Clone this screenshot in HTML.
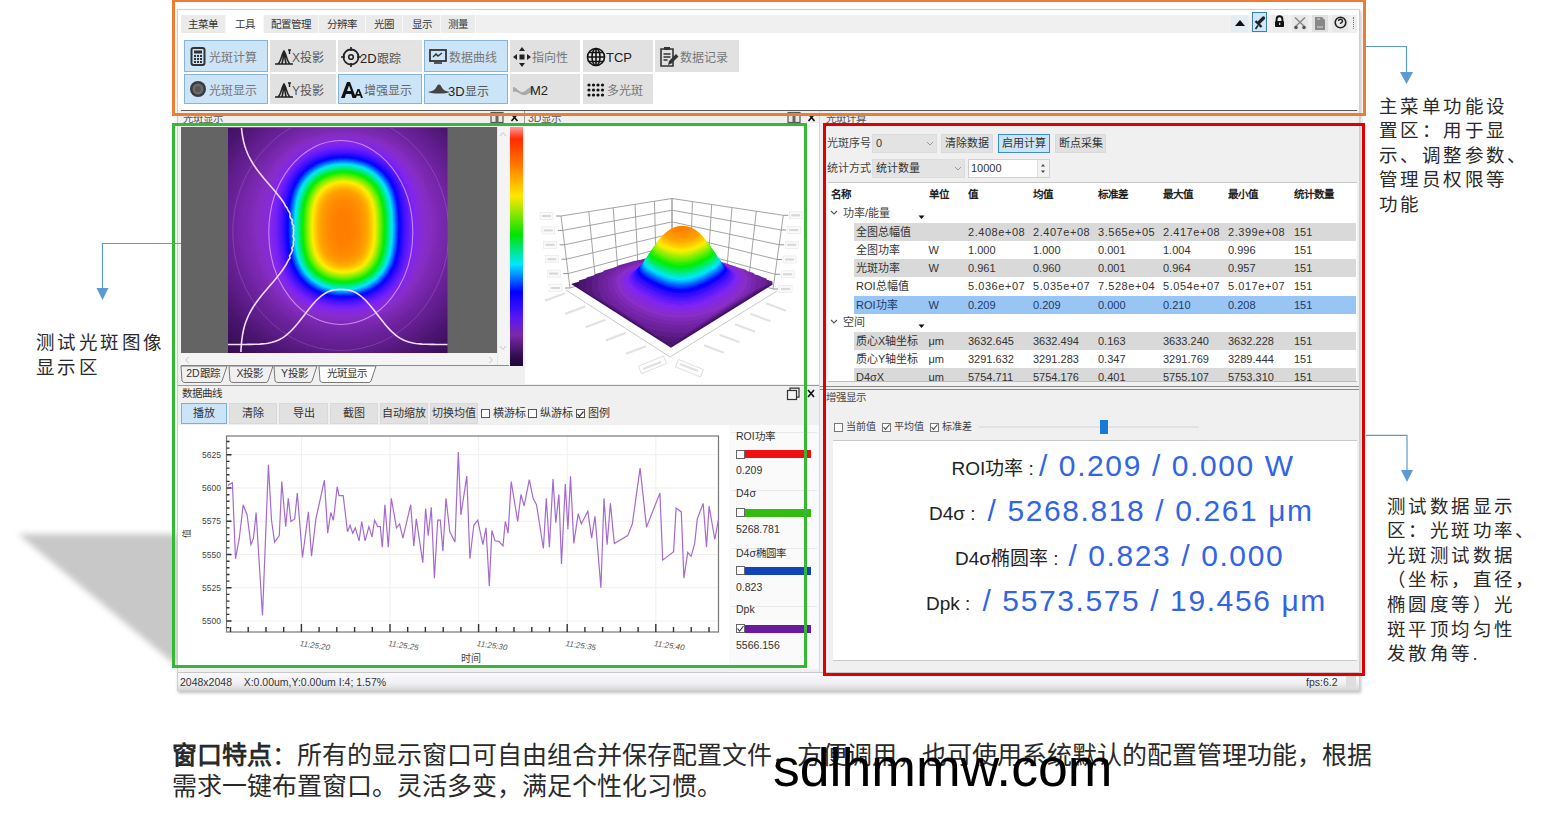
<!DOCTYPE html>
<html lang="zh-CN"><head><meta charset="utf-8">
<style>
*{margin:0;padding:0;box-sizing:border-box}
html,body{width:1545px;height:815px;overflow:hidden;background:#fff}
body{position:relative;font-family:"Liberation Sans",sans-serif;color:#222;text-spacing-trim:space-all}
.a{position:absolute}
.ui{font-size:10.5px;color:#333;white-space:nowrap;line-height:1}
.btn{position:absolute;background:#e1e1e1;border:1px solid #e1e1e1;font-size:12px;color:#555;white-space:nowrap;line-height:29px;padding-left:4px}
.btn.sel{background:#cce4f7;border-color:#88b4dc}
.tab{position:absolute;top:15px;height:18px;background:#ebebeb;font-size:10.5px;color:#333;text-align:center;line-height:18px;border-right:1px solid #f8f8f8}
.tab.sel{background:#fff}
.tb{position:absolute;top:403px;height:21px;background:#e1e1e1;border:1px solid #d9d9d9;font-size:11px;color:#333;text-align:center;line-height:19px}
.tb.sel{background:#cce4f7;border-color:#7aaee0}
.ann{position:absolute;font-size:18.5px;letter-spacing:2.4px;line-height:24.6px;color:#2a2a2a;white-space:nowrap}
.hdr{position:absolute;top:186px;font-size:10.5px;font-weight:bold;color:#222;white-space:nowrap}
.row{position:absolute;left:854px;width:502px;height:18px}
.cell{position:absolute;font-size:11px;color:#333;white-space:nowrap;line-height:18px;top:0}
.lg{position:absolute;font-size:11px;color:#333;white-space:nowrap}
.big{position:absolute;white-space:nowrap;line-height:1}
.big .l{font-size:19px;color:#222}
.big .v{font-size:30px;color:#3264e4;letter-spacing:1.6px}

</style></head><body>

<!-- shadow -->
<svg class="a" style="left:0;top:515px" width="200" height="170">
 <defs><filter id="sb" x="-20%" y="-20%" width="140%" height="140%"><feGaussianBlur stdDeviation="3"/></filter></defs>
 <polygon points="18,19 178,19 178,152" fill="#c8c8c8" filter="url(#sb)"/>
</svg>

<!-- app window -->
<div class="a" style="left:177px;top:9px;width:1183px;height:682px;background:#f0f0f0;border:1px solid #cfcfcf;box-shadow:1px 2px 3px rgba(0,0,0,0.25)"></div>
<!-- ribbon white -->
<div class="a" style="left:178px;top:10px;width:1181px;height:100px;background:#fff"></div>
<div class="a" style="left:181px;top:15px;width:1176px;height:18px;background:#f0f0f0"></div>
<div class="tab" style="left:181px;width:45px">主菜单</div>
<div class="tab sel" style="left:226px;width:38px">工具</div>
<div class="tab" style="left:264px;width:55px">配置管理</div>
<div class="tab" style="left:319px;width:47px">分辨率</div>
<div class="tab" style="left:366px;width:37px">光圈</div>
<div class="tab" style="left:403px;width:38px">显示</div>
<div class="tab" style="left:441px;width:35px">测量</div>
<div class="a" style="left:181px;top:110px;width:1176px;height:1px;background:#5a5a5a"></div>

<!-- ribbon buttons -->
<div class="btn sel" style="left:184px;top:40px;width:84px;height:32px"><svg class="a" style="left:4.5px;top:6px" width="16" height="19" viewBox="0 0 16 19"><rect x="1.5" y="1" width="13" height="17" rx="2" fill="none" stroke="#333" stroke-width="2"/><rect x="4" y="3.5" width="8" height="3" fill="#333"/><g fill="#333"><rect x="4" y="8" width="2" height="2"/><rect x="7" y="8" width="2" height="2"/><rect x="10" y="8" width="2" height="2"/><rect x="4" y="11" width="2" height="2"/><rect x="7" y="11" width="2" height="2"/><rect x="10" y="11" width="2" height="2"/><rect x="4" y="14" width="2" height="2"/><rect x="7" y="14" width="2" height="2"/><rect x="10" y="14" width="2" height="2"/></g></svg><span class="a" style="left:24px;top:3px;color:#777">光斑计算</span></div>
<div class="btn" style="left:270px;top:40px;width:66px;height:32px"><svg class="a" style="left:3px;top:8px" width="22" height="16" viewBox="0 0 22 16"><path d="M1 15H19M4 15C7 13 8 4 10 2C12 4 13 13 16 15M8 15C9 10 10 6 10 2M12 15C11 10 10.5 6 10 2" fill="none" stroke="#222" stroke-width="1.6"/><path d="M14 1h3M15.5 1v4" stroke="#222" stroke-width="1.4"/></svg><span class="a" style="left:21px;top:3px;color:#555">X投影</span></div>
<div class="btn" style="left:338px;top:40px;width:84px;height:32px;background:#e3e3e3"><svg class="a" style="left:2px;top:6px" width="20" height="20" viewBox="0 0 20 20"><circle cx="10" cy="10" r="7.5" fill="none" stroke="#222" stroke-width="1.8"/><circle cx="10" cy="10" r="2.3" fill="none" stroke="#222" stroke-width="1.6"/><path d="M10 0v4M10 16v4M0 10h4M16 10h4" stroke="#222" stroke-width="1.6"/></svg><span class="a" style="left:21px;top:3px;color:#555"><span style="color:#222;font-size:13px">2D</span>跟踪</span></div>
<div class="btn sel" style="left:424px;top:40px;width:84px;height:32px"><svg class="a" style="left:4px;top:8px" width="18" height="16" viewBox="0 0 18 16"><rect x="1" y="1" width="16" height="11" fill="none" stroke="#333" stroke-width="1.8"/><path d="M5 14h8" stroke="#333" stroke-width="1.6"/><path d="M4 8l3-3 2 2 4-3" fill="none" stroke="#333" stroke-width="1.4"/></svg><span class="a" style="left:24px;top:3px;color:#777">数据曲线</span></div>
<div class="btn" style="left:510px;top:40px;width:70px;height:32px"><svg class="a" style="left:2px;top:6px" width="18" height="20" viewBox="0 0 18 20"><path d="M9 0L6 4h6zM9 20l-3-4h6zM0 10l4-3v6zM18 10l-4-3v6z" fill="#222"/><rect x="6.5" y="7.5" width="5" height="5" fill="#222"/></svg><span class="a" style="left:21px;top:3px;color:#777">指向性</span></div>
<div class="btn" style="left:583px;top:40px;width:70px;height:32px"><svg class="a" style="left:2px;top:6px" width="20" height="20" viewBox="0 0 20 20"><g fill="none" stroke="#111" stroke-width="1.6"><circle cx="10" cy="10" r="8.5"/><ellipse cx="10" cy="10" rx="4" ry="8.5"/><path d="M10 1.5v17M1.5 10h17M3 5.5h14M3 14.5h14"/></g></svg><span class="a" style="left:22px;top:2px;color:#222;font-size:13px">TCP</span></div>
<div class="btn" style="left:655px;top:40px;width:84px;height:32px"><svg class="a" style="left:3px;top:5px" width="20" height="22" viewBox="0 0 20 22"><path d="M2 3h12v17H2z" fill="none" stroke="#333" stroke-width="1.6"/><path d="M5 1h6v3H5z" fill="#333"/><path d="M4.5 8h7M4.5 11h7M4.5 14h4" stroke="#333" stroke-width="1.3"/><path d="M9 19l1-4 7-7 2.5 2.5-7 7z" fill="#333"/></svg><span class="a" style="left:24px;top:3px;color:#777">数据记录</span></div>

<div class="btn sel" style="left:184px;top:74px;width:84px;height:30px;line-height:27px"><svg class="a" style="left:4px;top:5px" width="18" height="18" viewBox="0 0 18 18"><circle cx="9" cy="9" r="8" fill="#3a3a3a"/><circle cx="9" cy="9" r="5.5" fill="#6a6a6a"/><circle cx="9" cy="9" r="3" fill="#555"/></svg><span class="a" style="left:24px;top:2.5px;color:#777">光斑显示</span></div>
<div class="btn" style="left:270px;top:74px;width:66px;height:30px;line-height:27px"><svg class="a" style="left:3px;top:7px" width="22" height="16" viewBox="0 0 22 16"><path d="M1 15H19M4 15C7 13 8 4 10 2C12 4 13 13 16 15M8 15C9 10 10 6 10 2M12 15C11 10 10.5 6 10 2" fill="none" stroke="#222" stroke-width="1.6"/><path d="M14 1h3M15.5 1v4" stroke="#222" stroke-width="1.4"/></svg><span class="a" style="left:21px;top:2.5px;color:#555">Y投影</span></div>
<div class="btn sel" style="left:338px;top:74px;width:84px;height:30px;line-height:27px"><svg class="a" style="left:2px;top:6px" width="22" height="18" viewBox="0 0 22 18"><path d="M0 17L6 1h3l6 16h-3.5l-1.3-4H5l-1.3 4zM6 10h4L8 4.5z" fill="#111"/><path d="M13 17l3.5-9h2l3.5 9h-2l-.8-2.3h-3.4L15 17zM16.3 13h2.2l-1.1-3z" fill="#111"/></svg><span class="a" style="left:25px;top:2.5px;color:#666">增强显示</span></div>
<div class="btn sel" style="left:424px;top:74px;width:84px;height:30px;line-height:27px"><svg class="a" style="left:3px;top:9px" width="22" height="12" viewBox="0 0 22 12"><path d="M0 8C5 7 7 6 9 2C10 0 12 0 13 2C15 6 17 7 22 8C17 10 5 10 0 8z" fill="#444"/></svg><span class="a" style="left:23px;top:2.5px;color:#555"><span style="color:#222;font-size:13px">3D</span>显示</span></div>
<div class="btn" style="left:510px;top:74px;width:70px;height:30px;line-height:27px"><svg class="a" style="left:2px;top:9px" width="20" height="12" viewBox="0 0 20 12"><path d="M0 3C4 3 6 9 10 8C14 7 16 2 20 3V9C16 8 14 12 10 11C6 10 4 6 0 8z" fill="#aaa"/></svg><span class="a" style="left:19px;top:1.5px;color:#222;font-size:13px">M2</span></div>
<div class="btn" style="left:583px;top:74px;width:70px;height:30px;line-height:27px"><svg class="a" style="left:3px;top:8px" width="18" height="14" viewBox="0 0 18 14"><g fill="#111"><circle cx="2" cy="2" r="1.6"/><circle cx="6.5" cy="2" r="1.6"/><circle cx="11" cy="2" r="1.6"/><circle cx="15.5" cy="2" r="1.6"/><circle cx="2" cy="7" r="1.6"/><circle cx="6.5" cy="7" r="1.6"/><circle cx="11" cy="7" r="1.6"/><circle cx="15.5" cy="7" r="1.6"/><circle cx="2" cy="12" r="1.6"/><circle cx="6.5" cy="12" r="1.6"/><circle cx="11" cy="12" r="1.6"/><circle cx="15.5" cy="12" r="1.6"/></g></svg><span class="a" style="left:23px;top:2.5px;color:#777">多光斑</span></div>

<!-- right top icons -->
<div class="a" style="left:1231px;top:15px;width:17px;height:17px;background:#e4ecf4"></div>
<svg class="a" style="left:1234px;top:19px" width="12" height="8"><path d="M1 7L6 1L11 7z" fill="#111"/></svg>
<div class="a" style="left:1252px;top:12px;width:15px;height:20px;background:#cce8fb;border:1px solid #3c7fb1"></div>
<svg class="a" style="left:1252px;top:12px" width="15" height="20" viewBox="0 0 15 20"><path d="M11.5 6L7 10.5" stroke="#222" stroke-width="3.2" stroke-linecap="round"/><path d="M3.5 9L9.5 15" stroke="#222" stroke-width="2.4"/><path d="M6 13.5L3.5 17" stroke="#222" stroke-width="1.6"/></svg>
<div class="a" style="left:1272px;top:15px;width:16px;height:17px;background:#ececec"></div>
<svg class="a" style="left:1273px;top:15px" width="13" height="13" viewBox="0 0 13 13"><path d="M3.6 6V4.2a2.9 2.9 0 015.8 0V6" fill="none" stroke="#111" stroke-width="1.9"/><rect x="2" y="6" width="9" height="6" rx="0.8" fill="#111"/><rect x="6" y="7.6" width="1.3" height="2.4" fill="#ccc"/></svg>
<div class="a" style="left:1292px;top:15px;width:16px;height:17px;background:#e8e8e8"></div>
<svg class="a" style="left:1293px;top:16px" width="14" height="14" viewBox="0 0 14 14"><path d="M2 1.5L12 11M12 1.5L2 11" stroke="#8a8a8a" stroke-width="1.5"/><circle cx="3" cy="11.5" r="1.8" fill="#555"/><circle cx="11" cy="11.5" r="1.8" fill="#555"/></svg>
<div class="a" style="left:1312px;top:15px;width:16px;height:17px;background:#e0e0e0"></div>
<svg class="a" style="left:1314px;top:16px" width="12" height="15" viewBox="0 0 12 15"><path d="M1 1h7l3 3v10H1z" fill="#888"/><path d="M3 3h3M3 11h6" stroke="#ddd" stroke-width="1"/></svg>
<div class="a" style="left:1332px;top:15px;width:16px;height:17px;background:#e8e8e8"></div>
<svg class="a" style="left:1334px;top:16px" width="13" height="13" viewBox="0 0 13 13"><circle cx="6.5" cy="6.5" r="5.3" fill="none" stroke="#222" stroke-width="1.6"/><path d="M4.5 5a2 2 0 114 0.5c0 1-2 1-2 2.5" fill="none" stroke="#222" stroke-width="1.4"/></svg>
<div class="a" style="left:1353px;top:17px;width:3px;height:12px;border-left:1px dotted #777"></div>


<!-- dock titles -->
<div class="a ui" style="left:183px;top:113px;color:#555">光斑显示</div>
<div class="a ui" style="left:528px;top:113px;color:#555">3D显示</div>
<div class="a ui" style="left:826px;top:113px;color:#555">光斑计算</div>
<div class="a" style="left:524px;top:111px;width:1px;height:12px;background:#999"></div>
<svg class="a" style="left:489px;top:110px" width="32" height="14"><rect x="2" y="2.5" width="12" height="10" fill="#e8e8e8" stroke="#555" stroke-width="1.2"/><rect x="6.5" y="2.5" width="3" height="10" fill="#666"/><path d="M22.5 4L28.5 11M28.5 4L22.5 11" stroke="#111" stroke-width="1.7"/></svg>
<svg class="a" style="left:786px;top:110px" width="32" height="14"><rect x="2" y="2.5" width="12" height="10" fill="#e8e8e8" stroke="#555" stroke-width="1.2"/><rect x="6.5" y="2.5" width="3" height="10" fill="#666"/><path d="M22.5 4L28.5 11M28.5 4L22.5 11" stroke="#111" stroke-width="1.7"/></svg>
<div class="a" style="left:819px;top:111px;width:1px;height:575px;background:#d8d8d8"></div>

<div class="a" style="left:178px;top:123px;width:346px;height:263px;background:#f0f0f0"></div>
<div class="a" style="left:181px;top:127px;width:316px;height:226px;background:#646464"></div>
<div class="a" style="left:497px;top:127px;width:12px;height:238px;background:#f4f4f4;border-left:1px solid #e6e6e6"></div>
<div class="a" style="left:181px;top:353px;width:316px;height:12px;background:#f4f4f4"></div>
<div class="a" style="left:181px;top:365px;width:328px;height:1px;background:#8a8a8a"></div>
<svg class="a" style="left:499px;top:131px" width="8" height="6"><path d="M1 5L4 1.5L7 5" fill="none" stroke="#c8c8c8"/></svg>
<svg class="a" style="left:499px;top:345px" width="8" height="6"><path d="M1 1L4 4.5L7 1" fill="none" stroke="#c8c8c8"/></svg>
<svg class="a" style="left:184px;top:356px" width="6" height="8"><path d="M5 1L1.5 4L5 7" fill="none" stroke="#c8c8c8"/></svg>
<svg class="a" style="left:488px;top:356px" width="6" height="8"><path d="M1 1L4.5 4L1 7" fill="none" stroke="#c8c8c8"/></svg>
<svg class="a" style="left:510px;top:127px" width="13" height="239"><defs><linearGradient id="cbar" x1="0" y1="0" x2="0" y2="1"><stop offset="0.0" stop-color="#ff9a9a"/><stop offset="0.05" stop-color="#ff2a00"/><stop offset="0.16" stop-color="#ff7a00"/><stop offset="0.29" stop-color="#ffe800"/><stop offset="0.45" stop-color="#00e400"/><stop offset="0.575" stop-color="#00e8ff"/><stop offset="0.69" stop-color="#0000ff"/><stop offset="0.8" stop-color="#5a18f0"/><stop offset="0.87" stop-color="#7a2aa8"/><stop offset="0.97" stop-color="#2a0a44"/><stop offset="1.0" stop-color="#1e0838"/></linearGradient></defs><rect width="13" height="239" fill="url(#cbar)"/></svg>
<svg class="a" style="left:228px;top:127.5px" width="219.5" height="225" viewBox="0 0 219.5 225">
<defs>
<clipPath id="imgclip"><rect width="219.5" height="225"/></clipPath>
<radialGradient id="halo" cx="115.5" cy="99" r="170" gradientUnits="userSpaceOnUse"><stop offset="0.00" stop-color="#00ff00"/><stop offset="0.08" stop-color="#00fc00"/><stop offset="0.17" stop-color="#00f300"/><stop offset="0.25" stop-color="#00e400"/><stop offset="0.33" stop-color="#00d200"/><stop offset="0.42" stop-color="#00bc00"/><stop offset="0.50" stop-color="#00a400"/><stop offset="0.58" stop-color="#008c00"/><stop offset="0.67" stop-color="#007400"/><stop offset="0.75" stop-color="#005f00"/><stop offset="0.83" stop-color="#004b00"/><stop offset="0.92" stop-color="#003a00"/><stop offset="1.00" stop-color="#002c00"/></radialGradient>
<filter id="beamf" x="-100" y="-100" width="420" height="425" filterUnits="userSpaceOnUse" color-interpolation-filters="sRGB">
 <feGaussianBlur in="SourceGraphic" stdDeviation="17.5" result="b1"/>
 <feColorMatrix in="b1" type="matrix" values="0.66 0 0 0 0  0.66 0 0 0 0  0.66 0 0 0 0  0 0 0 0 1" result="c1"/>
 <feColorMatrix in="SourceGraphic" type="matrix" values="0 0.23 0 0 0  0 0.23 0 0 0  0 0.23 0 0 0  0 0 0 0 1" result="c2"/>
 <feComposite in="c1" in2="c2" operator="arithmetic" k1="0" k2="1" k3="1" k4="0" result="sum"/>
 <feComponentTransfer in="sum"><feFuncR type="table" tableValues="0.118 0.157 0.192 0.231 0.278 0.333 0.384 0.431 0.475 0.522 0.533 0.522 0.510 0.478 0.424 0.365 0.310 0.251 0.184 0.118 0.051 0.000 0.000 0.000 0.000 0.000 0.000 0.000 0.000 0.000 0.000 0.000 0.000 0.000 0.000 0.035 0.141 0.247 0.353 0.459 0.565 0.671 0.776 0.882 0.988 1.000 1.000 1.000 1.000 1.000 1.000 1.000 1.000 1.000 1.000 1.000 1.000 1.000 1.000 1.000 1.000 1.000 1.000 1.000"/><feFuncG type="table" tableValues="0.024 0.035 0.043 0.055 0.075 0.098 0.118 0.137 0.157 0.173 0.173 0.161 0.149 0.133 0.118 0.098 0.082 0.063 0.047 0.031 0.012 0.031 0.176 0.318 0.463 0.608 0.753 0.898 0.914 0.918 0.918 0.922 0.925 0.929 0.929 0.933 0.933 0.933 0.937 0.937 0.937 0.937 0.941 0.941 0.941 0.894 0.843 0.788 0.737 0.682 0.639 0.612 0.588 0.561 0.537 0.514 0.486 0.447 0.369 0.290 0.212 0.133 0.333 0.565"/><feFuncB type="table" tableValues="0.220 0.263 0.310 0.353 0.420 0.490 0.561 0.627 0.690 0.757 0.816 0.871 0.925 0.961 0.969 0.980 0.988 1.000 1.000 1.000 1.000 1.000 1.000 1.000 1.000 1.000 1.000 1.000 0.878 0.749 0.616 0.482 0.349 0.220 0.086 0.000 0.000 0.000 0.000 0.000 0.000 0.000 0.000 0.000 0.000 0.000 0.000 0.000 0.000 0.000 0.000 0.000 0.000 0.000 0.000 0.000 0.000 0.000 0.000 0.000 0.000 0.000 0.267 0.565"/><feFuncA type="identity"/></feComponentTransfer>
</filter>
</defs>
<g clip-path="url(#imgclip)"><g filter="url(#beamf)" style="isolation:isolate">
 <rect x="-100" y="-100" width="420" height="425" fill="#000"/>
 <rect x="-100" y="-100" width="420" height="425" fill="url(#halo)"/>
 <rect x="73.5" y="40.5" width="84" height="117" rx="30" fill="#ff0000" style="mix-blend-mode:screen"/>
</g></g>
</svg>
<svg class="a" style="left:228px;top:127.5px" width="219.5" height="225" viewBox="228 127.5 219.5 225">
<ellipse cx="340.8" cy="232" rx="72" ry="92" fill="none" stroke="#d8a0ff" stroke-opacity="0.8" stroke-width="1.1"/>
<ellipse cx="340.8" cy="232" rx="108" ry="118" fill="none" stroke="#e8a0e8" stroke-opacity="0.22" stroke-width="1"/>
<polyline points="241.5,127.5 241.7,129.5 241.9,131.5 242.2,133.5 242.5,135.5 242.9,137.5 243.3,139.5 243.7,141.5 244.3,143.5 244.8,145.5 245.5,147.5 246.2,149.5 247.0,151.5 247.8,153.5 248.7,155.5 249.7,157.5 250.8,159.5 252.0,161.5 253.2,163.5 254.5,165.5 255.9,167.5 257.3,169.5 258.8,171.5 260.4,173.5 262.0,175.5 263.6,177.5 265.3,179.5 267.0,181.5 268.8,183.5 270.5,185.5 272.2,187.5 273.9,189.5 275.6,191.5 277.2,193.5 278.8,195.5 280.4,197.5 281.9,199.5 283.3,201.5 284.6,203.5 285.4,205.5 287.1,207.5 287.8,209.5 289.2,211.5 290.1,213.5 289.9,215.5 290.5,217.5 292.4,219.5 292.0,221.5 292.3,223.5 293.8,225.5 293.2,227.5 293.9,229.5 293.4,231.5 293.7,233.5 292.9,235.5 293.7,237.5 294.0,239.5 293.3,241.5 293.5,243.5 293.2,245.5 291.8,247.5 292.5,249.5 291.7,251.5 290.7,253.5 289.5,255.5 290.0,257.5 288.5,259.5 287.5,261.5 286.4,263.5 285.2,265.5 283.9,267.5 282.6,269.5 281.1,271.5 279.6,273.5 278.0,275.5 276.4,277.5 274.8,279.5 273.1,281.5 271.3,283.5 269.6,285.5 267.9,287.5 266.2,289.5 264.5,291.5 262.8,293.5 261.2,295.5 259.6,297.5 258.1,299.5 256.6,301.5 255.2,303.5 253.8,305.5 252.6,307.5 251.4,309.5 250.3,311.5 249.2,313.5 248.3,315.5 247.4,317.5 246.6,319.5 245.8,321.5 245.1,323.5 244.5,325.5 244.0,327.5 243.5,329.5 243.1,331.5 242.7,333.5 242.4,335.5 242.1,337.5 241.8,339.5 241.6,341.5 241.4,343.5 241.3,345.5 241.1,347.5 241.0,349.5 240.9,351.5" fill="none" stroke="#f4dcff" stroke-width="1.6"/>
<polyline points="228.0,344.0 230.0,344.0 232.0,344.0 234.0,344.0 236.0,344.0 238.0,344.0 240.0,344.0 242.0,344.0 244.0,344.0 246.0,344.0 248.0,343.9 250.0,343.9 252.0,343.9 254.0,343.8 256.0,343.8 258.0,343.7 260.0,343.6 262.0,343.4 264.0,343.2 266.0,343.0 268.0,342.7 270.0,342.3 272.0,341.8 274.0,341.2 276.0,340.5 278.0,339.7 280.0,338.7 282.0,337.6 284.0,336.3 286.0,334.8 288.0,333.1 290.0,331.3 292.0,329.4 294.0,327.2 296.0,324.9 298.0,322.6 300.0,320.1 302.0,317.5 304.0,314.9 306.0,312.3 308.0,309.7 310.0,307.2 312.0,304.8 314.0,302.5 316.0,300.3 318.0,298.3 320.0,296.5 322.0,294.9 324.0,293.5 326.0,292.3 328.0,291.3 330.0,290.5 332.0,289.9 334.0,289.5 336.0,289.2 338.0,289.1 340.0,289.0 342.0,289.0 344.0,289.1 346.0,289.2 348.0,289.5 350.0,289.9 352.0,290.5 354.0,291.3 356.0,292.3 358.0,293.5 360.0,294.9 362.0,296.5 364.0,298.3 366.0,300.3 368.0,302.5 370.0,304.8 372.0,307.2 374.0,309.7 376.0,312.3 378.0,314.9 380.0,317.5 382.0,320.1 384.0,322.6 386.0,324.9 388.0,327.2 390.0,329.4 392.0,331.3 394.0,333.1 396.0,334.8 398.0,336.3 400.0,337.6 402.0,338.7 404.0,339.7 406.0,340.5 408.0,341.2 410.0,341.8 412.0,342.3 414.0,342.7 416.0,343.0 418.0,343.2 420.0,343.4 422.0,343.6 424.0,343.7 426.0,343.8 428.0,343.8 430.0,343.9 432.0,343.9 434.0,343.9 436.0,344.0 438.0,344.0 440.0,344.0 442.0,344.0 444.0,344.0 446.0,344.0 447.5,344.0" fill="none" stroke="#f4dcff" stroke-width="1.6"/>
</svg>
<div class="a" style="left:178px;top:385px;width:641px;height:1px;background:#9a9a9a"></div>
<svg class="a" style="left:178px;top:365px" width="210" height="20" viewBox="178 365 210 20"><path d="M181 366 L227 366 L222 381 Q221 382.5 220 382.5 L185 382.5 Q183 382.5 182 381 Z" fill="#f0f0f0" stroke="#7a7a7a" stroke-width="1"/><path d="M229 366 L273 366 L268 381 Q267 382.5 266 382.5 L233 382.5 Q231 382.5 230 381 Z" fill="#f0f0f0" stroke="#7a7a7a" stroke-width="1"/><path d="M274 366 L317 366 L312 381 Q311 382.5 310 382.5 L278 382.5 Q276 382.5 275 381 Z" fill="#f0f0f0" stroke="#7a7a7a" stroke-width="1"/><path d="M319 366 L376 366 L371 381 Q370 382.5 369 382.5 L323 382.5 Q321 382.5 320 381 Z" fill="#ffffff" stroke="#7a7a7a" stroke-width="1"/></svg>
<div class="a ui" style="left:181px;top:368px;width:44px;text-align:center;font-size:10.5px;color:#333">2D跟踪</div>
<div class="a ui" style="left:229px;top:368px;width:42px;text-align:center;font-size:10.5px;color:#333">X投影</div>
<div class="a ui" style="left:274px;top:368px;width:41px;text-align:center;font-size:10.5px;color:#333">Y投影</div>
<div class="a ui" style="left:319px;top:368px;width:55px;text-align:center;font-size:10.5px;color:#333">光斑显示</div>
<div class="a" style="left:525px;top:123px;width:294px;height:261px;background:#fff"></div>
<svg class="a" style="left:525px;top:123px" width="294" height="261" viewBox="525 123 294 261"><path d="M561.0 216.0L570.0 288.0M588.8 211.6L595.5 280.2M613.2 207.8L618.0 273.4M635.0 204.3L638.0 267.3M654.5 201.3L655.9 261.9M672.0 198.5L672.0 257.0M672.0 198.5L672.0 257.0M692.4 201.6L690.5 262.9M711.7 204.5L708.0 268.4M732.0 207.6L726.4 274.3M756.3 211.2L748.5 281.2M783.3 215.3L773.0 289.0M570.0 288.0L672.0 257.0L773.0 289.0M568.2 273.6L672.0 245.3L775.1 274.3M566.4 259.2L672.0 233.6L777.1 259.5M564.6 244.8L672.0 221.9L779.2 244.8M562.8 230.4L672.0 210.2L781.2 230.0M561.0 216.0L672.0 198.5L783.3 215.3" fill="none" stroke="#9a9a9a" stroke-width="0.9"/><path d="M570.0 288.0h-5M773.0 289.0h5M568.2 273.6h-5M775.1 274.3h5M566.4 259.2h-5M777.1 259.5h5M564.6 244.8h-5M779.2 244.8h5M562.8 230.4h-5M781.2 230.0h5M561.0 216.0h-5M783.3 215.3h5" stroke="#888" stroke-width="0.9"/><rect x="549.0" y="284.5" width="13" height="7" fill="#fbfbfb" stroke="#e4e4e4" stroke-width="0.6"/><path d="M551.0 288.0h9" stroke="#d8d8d8" stroke-width="2.2"/><rect x="779.0" y="285.5" width="13" height="7" fill="#fbfbfb" stroke="#e4e4e4" stroke-width="0.6"/><path d="M781.0 289.0h9" stroke="#d8d8d8" stroke-width="2.2"/><rect x="547.2" y="270.1" width="13" height="7" fill="#fbfbfb" stroke="#e4e4e4" stroke-width="0.6"/><path d="M549.2 273.6h9" stroke="#d8d8d8" stroke-width="2.2"/><rect x="781.1" y="270.8" width="13" height="7" fill="#fbfbfb" stroke="#e4e4e4" stroke-width="0.6"/><path d="M783.1 274.3h9" stroke="#d8d8d8" stroke-width="2.2"/><rect x="545.4" y="255.7" width="13" height="7" fill="#fbfbfb" stroke="#e4e4e4" stroke-width="0.6"/><path d="M547.4 259.2h9" stroke="#d8d8d8" stroke-width="2.2"/><rect x="783.1" y="256.0" width="13" height="7" fill="#fbfbfb" stroke="#e4e4e4" stroke-width="0.6"/><path d="M785.1 259.5h9" stroke="#d8d8d8" stroke-width="2.2"/><rect x="543.6" y="241.3" width="13" height="7" fill="#fbfbfb" stroke="#e4e4e4" stroke-width="0.6"/><path d="M545.6 244.8h9" stroke="#d8d8d8" stroke-width="2.2"/><rect x="785.2" y="241.3" width="13" height="7" fill="#fbfbfb" stroke="#e4e4e4" stroke-width="0.6"/><path d="M787.2 244.8h9" stroke="#d8d8d8" stroke-width="2.2"/><rect x="541.8" y="226.9" width="13" height="7" fill="#fbfbfb" stroke="#e4e4e4" stroke-width="0.6"/><path d="M543.8 230.4h9" stroke="#d8d8d8" stroke-width="2.2"/><rect x="787.2" y="226.5" width="13" height="7" fill="#fbfbfb" stroke="#e4e4e4" stroke-width="0.6"/><path d="M789.2 230.0h9" stroke="#d8d8d8" stroke-width="2.2"/><rect x="540.0" y="212.5" width="13" height="7" fill="#fbfbfb" stroke="#e4e4e4" stroke-width="0.6"/><path d="M542.0 216.0h9" stroke="#d8d8d8" stroke-width="2.2"/><rect x="789.3" y="211.8" width="13" height="7" fill="#fbfbfb" stroke="#e4e4e4" stroke-width="0.6"/><path d="M791.3 215.3h9" stroke="#d8d8d8" stroke-width="2.2"/><defs><filter id="sblur" x="-5%" y="-5%" width="110%" height="110%"><feGaussianBlur stdDeviation="0.7"/></filter></defs><g filter="url(#sblur)"><path d="M671.0 347.7 571.1 283.9 672.0 253.7 773.0 284.3 671.0 347.7Z" fill="#3e0f5f"/><path d="M671.0 346.6 578.9 288.1 579.0 280.6 672.0 252.9 773.0 283.4 671.0 346.6Z" fill="#48136c"/><path d="M665.2 341.8 586.6 292.0 585.4 284.0 586.7 277.4 666.4 253.8 676.5 253.5 773.0 282.4 675.6 342.6 665.2 341.8Z" fill="#52187a"/><path d="M656.8 335.4 594.6 296.1 592.3 290.1 591.5 284.4 592.4 278.9 594.8 274.2 658.3 255.5 682.5 254.5 772.6 281.4 681.6 337.8 668.0 337.3 656.8 335.4Z" fill="#5d1c87"/><path d="M647.7 328.5 603.8 300.9 598.9 292.4 597.6 288.1 597.3 284.3 597.7 280.4 598.9 277.0 601.2 273.5 604.1 270.5 649.0 257.4 667.6 256.0 688.5 255.5 766.6 278.6 766.5 284.5 687.7 333.0 677.4 333.3 666.8 332.6 656.0 330.8 647.7 328.5Z" fill="#672095"/><path d="M632.7 318.1 618.6 309.2 613.2 304.4 606.9 296.7 603.3 288.8 602.7 285.2 602.8 281.5 603.7 278.2 605.2 275.4 607.6 272.4 610.6 269.8 619.0 265.3 634.1 260.9 648.8 258.6 670.9 256.9 694.7 256.6 760.4 275.9 760.6 276.5 761.4 281.4 760.3 287.4 693.9 328.1 677.8 329.0 661.7 327.5 645.9 323.6 632.7 318.1Z" fill="#6f24a1"/><path d="M633.5 313.8 623.7 307.6 615.3 299.9 609.9 292.1 607.8 284.9 607.8 281.8 608.6 278.5 610.1 275.7 612.5 272.7 619.2 267.9 629.7 263.7 643.9 260.5 661.4 258.4 681.9 257.4 701.4 257.7 753.7 273.0 755.7 276.9 756.3 280.3 756.1 283.4 753.5 290.5 700.7 322.9 692.1 324.3 683.2 324.9 674.7 324.9 666.0 324.1 656.9 322.4 648.6 320.2 641.2 317.4 633.5 313.8Z" fill="#7827ae"/><path d="M634.4 309.7 625.1 303.3 617.9 296.2 613.5 289.0 612.3 282.6 612.7 279.8 614.0 276.8 618.7 271.4 626.2 267.0 635.8 263.6 651.8 260.4 670.7 258.6 690.6 258.2 709.3 259.2 745.8 269.8 749.5 273.6 751.3 277.7 751.6 281.3 750.8 285.5 748.9 289.6 745.5 294.4 708.7 316.9 705.9 317.7 697.0 319.8 687.8 321.0 678.6 321.3 669.0 320.7 660.7 319.3 651.2 316.9 642.8 313.8 634.4 309.7Z" fill="#812aba"/><path d="M638.6 307.6 629.8 302.0 622.2 295.1 617.6 288.1 616.3 282.4 617.7 277.1 619.6 274.5 622.5 271.8 630.2 267.3 640.0 264.0 656.2 260.7 674.2 259.0 692.8 258.8 710.2 260.2 724.3 262.7 736.1 266.7 740.5 269.1 743.6 271.6 746.0 274.6 747.3 277.5 747.4 282.5 745.5 287.4 741.9 292.6 736.4 298.1 730.4 302.6 721.9 307.7 712.9 311.7 703.8 314.7 696.3 316.5 687.8 317.6 679.7 318.0 670.7 317.5 661.5 316.0 653.4 313.8 646.1 311.1 638.6 307.6Z" fill="#892ec7"/><path d="M647.0 307.8 636.5 302.3 628.0 295.9 622.2 289.3 619.7 283.3 620.3 278.3 621.9 275.5 624.2 273.1 630.9 268.8 640.2 265.1 654.6 261.7 671.4 259.5 688.4 259.0 705.2 260.2 720.4 262.9 731.8 266.5 739.9 271.3 742.5 274.1 743.9 277.0 744.2 281.3 742.7 285.5 739.7 290.0 734.3 295.4 727.6 300.3 720.8 304.4 713.2 308.1 704.6 311.2 696.1 313.5 689.3 314.6 675.1 314.9 660.7 312.6 647.0 307.8Z" fill="#882cd2"/><path d="M650.3 306.1 639.7 300.7 630.9 294.5 625.3 288.7 623.3 285.5 622.4 282.8 622.9 278.0 624.1 275.7 626.4 273.3 632.5 269.3 642.6 265.3 655.8 261.9 671.0 259.7 686.0 259.1 701.8 260.1 717.1 262.9 729.4 266.8 737.1 271.1 739.8 273.9 741.3 276.8 741.5 280.4 740.1 284.3 736.9 288.8 732.0 293.5 726.0 297.8 718.5 302.3 709.9 306.4 702.4 309.1 689.8 311.9 676.1 312.4 664.1 310.7 650.3 306.1Z" fill="#8529dc"/><path d="M651.3 303.7 640.0 297.8 631.4 291.6 626.7 286.4 625.3 283.8 624.6 281.1 624.7 278.8 625.6 276.3 629.3 272.4 635.8 268.6 646.2 264.7 659.7 261.3 672.9 259.6 687.0 259.1 700.0 260.0 715.2 262.8 727.5 266.8 735.3 271.1 738.0 274.0 739.1 276.3 739.2 280.0 737.9 283.4 734.5 287.7 730.1 291.7 723.3 296.5 715.7 300.9 708.0 304.5 700.6 307.2 687.9 309.9 676.2 310.2 663.6 308.1 651.3 303.7Z" fill="#8327e7"/><path d="M653.7 302.4 643.2 297.1 634.2 291.1 629.1 286.1 626.5 280.9 626.5 278.7 627.2 276.2 630.8 272.2 637.3 268.4 646.9 264.8 659.1 261.5 671.8 259.5 685.2 258.9 698.5 259.8 712.7 262.4 726.0 266.7 733.8 271.0 736.0 273.4 737.2 275.6 737.4 278.5 736.3 281.8 733.6 285.6 729.3 289.6 722.6 294.4 715.0 298.8 707.5 302.4 700.2 305.1 687.7 307.9 676.8 308.2 665.1 306.3 653.7 302.4Z" fill="#8125f2"/><path d="M650.5 298.7 640.6 293.1 633.6 288.0 629.2 282.8 628.2 280.3 628.1 277.9 630.0 273.8 634.4 270.3 642.4 266.5 653.6 262.8 664.6 260.3 675.9 258.9 688.2 258.7 699.5 259.7 713.2 262.6 725.5 266.7 732.0 270.3 734.3 272.6 735.5 274.9 735.6 278.4 734.2 281.7 731.2 285.3 726.6 289.2 719.7 293.8 711.0 298.6 703.3 302.0 696.7 304.1 685.1 306.2 674.0 306.0 662.0 303.4 650.5 298.7Z" fill="#7721f5"/><path d="M657.1 299.6 641.7 291.7 635.9 287.7 632.4 284.4 630.4 281.3 629.5 277.9 630.1 275.1 632.6 272.0 636.1 269.5 641.2 267.1 656.5 261.9 670.4 259.1 685.5 258.3 701.6 259.8 717.3 263.7 724.4 266.3 729.1 268.8 732.3 271.3 734.0 274.0 734.3 276.9 733.0 280.3 730.7 283.3 727.0 286.7 713.5 295.2 699.0 301.6 687.9 304.1 678.1 304.5 667.5 303.0 657.1 299.6Z" fill="#6c1ef7"/><path d="M658.0 298.1 643.4 290.7 637.6 286.8 634.0 283.6 631.8 280.6 630.8 277.2 631.5 274.1 633.6 271.6 637.1 269.1 642.1 266.6 657.5 261.4 671.4 258.7 685.8 257.9 701.7 259.6 717.1 263.6 728.1 268.3 731.3 270.9 732.9 273.7 732.9 276.6 731.6 279.6 729.2 282.6 725.3 285.9 711.7 294.3 698.0 300.1 688.2 302.3 677.8 302.8 668.5 301.5 658.0 298.1Z" fill="#611af9"/><path d="M657.9 296.3 643.5 288.9 638.4 285.5 634.9 282.3 632.7 279.3 631.9 276.4 632.5 273.7 634.5 271.1 638.0 268.6 643.0 266.1 657.4 261.1 671.1 258.3 684.7 257.5 699.7 258.9 715.4 262.8 722.5 265.4 727.3 267.8 730.4 270.5 731.6 272.7 731.8 275.5 730.7 278.3 728.3 281.3 724.5 284.6 710.8 292.9 697.1 298.7 687.2 300.8 677.3 301.1 668.3 299.8 657.9 296.3Z" fill="#5617fb"/><path d="M659.7 295.3 645.0 288.1 636.2 281.5 634.0 278.6 633.1 276.0 633.4 273.2 635.3 270.6 638.7 268.0 643.7 265.5 659.1 260.3 672.0 257.8 685.3 257.0 700.0 258.5 714.6 262.3 725.8 266.9 728.6 269.0 730.4 271.6 730.7 274.4 729.8 277.0 727.5 280.0 724.4 282.8 711.8 290.6 698.5 296.6 687.7 299.2 678.3 299.6 669.1 298.3 659.7 295.3Z" fill="#4b14fd"/><path d="M661.4 294.4 647.3 287.7 642.0 284.4 637.5 280.8 635.1 278.0 634.1 275.4 634.3 272.8 636.1 270.0 639.5 267.4 643.7 265.3 658.9 260.0 671.5 257.3 684.3 256.5 699.3 257.9 713.9 261.7 725.1 266.4 727.8 268.5 729.5 271.2 729.7 273.8 728.6 276.4 726.2 279.3 723.0 282.0 710.2 289.8 697.8 295.2 688.2 297.5 679.3 298.1 671.1 297.2 661.4 294.4Z" fill="#4010ff"/><path d="M654.7 289.9 645.6 285.1 639.4 280.7 635.9 276.7 635.1 274.8 635.1 272.7 637.3 269.0 642.2 265.7 650.7 262.2 661.4 258.9 671.0 256.9 680.0 256.1 689.3 256.2 698.6 257.3 709.9 260.1 720.4 263.7 726.1 267.0 727.9 268.9 728.7 270.7 728.7 273.2 727.4 275.8 724.9 278.7 720.9 281.8 706.0 290.3 693.8 294.9 684.5 296.5 674.3 296.2 665.0 294.1 654.7 289.9Z" fill="#330dff"/><path d="M658.9 290.2 646.3 283.8 638.3 277.8 636.6 275.5 635.9 272.9 636.4 270.5 637.9 268.4 641.4 265.9 645.7 263.7 660.2 258.7 671.7 256.3 684.2 255.5 698.0 256.7 712.6 260.5 723.2 264.8 726.0 266.9 727.7 269.5 727.8 272.0 726.7 274.6 724.2 277.5 721.0 280.1 708.1 287.7 695.4 292.9 686.7 294.8 677.9 295.0 668.9 293.7 658.9 290.2Z" fill="#270aff"/><path d="M661.3 289.7 648.4 283.5 640.0 277.7 637.7 274.9 636.7 272.3 637.1 269.9 638.6 267.8 642.0 265.2 646.3 263.1 660.7 258.1 672.3 255.7 684.9 254.9 698.4 256.3 712.9 260.1 723.2 264.6 725.7 266.8 726.9 269.0 727.0 271.1 726.1 273.4 723.6 276.3 720.4 278.9 707.5 286.5 695.9 291.3 687.4 293.2 678.7 293.6 669.6 292.3 661.3 289.7Z" fill="#1a06ff"/><path d="M655.6 285.7 646.6 280.9 641.2 277.0 638.3 273.7 637.6 271.8 637.6 269.9 639.7 266.7 644.6 263.5 653.3 259.9 663.2 256.9 671.8 255.2 679.8 254.4 688.5 254.5 696.8 255.5 708.1 258.2 718.6 261.8 723.7 264.8 726.1 268.1 726.2 270.3 725.0 272.8 722.4 275.6 718.4 278.7 705.1 286.1 693.0 290.6 683.8 292.2 675.1 291.9 665.8 289.9 655.6 285.7Z" fill="#0d03ff"/><path d="M660.5 286.5 648.7 280.6 641.2 275.3 639.3 273.1 638.3 270.6 638.7 268.1 640.3 266.0 643.8 263.5 648.2 261.4 661.8 256.8 673.6 254.4 685.0 253.8 698.3 255.2 711.8 258.8 721.4 262.9 724.1 265.0 725.3 267.2 725.4 269.3 724.4 271.6 721.9 274.5 718.6 277.0 706.4 284.0 694.7 288.7 686.1 290.6 677.7 290.8 669.6 289.5 660.5 286.5Z" fill="#0000ff"/><path d="M663.9 286.3 651.6 280.7 642.9 275.2 640.3 272.5 639.2 270.3 639.2 268.1 640.4 265.9 643.0 263.6 647.1 261.4 660.5 256.6 671.7 254.0 683.0 253.1 695.7 254.2 708.8 257.3 719.6 261.5 722.6 263.5 724.5 266.0 724.7 268.0 723.8 270.5 719.5 274.9 708.5 281.5 696.4 286.8 688.2 288.9 680.6 289.5 672.5 288.7 663.9 286.3Z" fill="#001cff"/><path d="M659.7 283.2 648.2 277.4 641.8 272.5 640.2 270.2 639.8 268.2 640.2 266.3 641.9 264.2 649.1 260.1 662.8 255.4 673.5 253.2 683.7 252.5 696.2 253.7 709.2 256.9 719.8 261.2 722.5 263.3 723.8 265.4 724.0 267.4 722.8 269.9 717.6 274.7 705.4 281.6 693.7 286.2 685.2 287.9 677.0 287.9 668.5 286.4 659.7 283.2Z" fill="#0038ff"/><path d="M663.9 283.5 651.7 278.0 643.3 272.4 640.6 268.3 640.6 266.2 641.9 264.0 644.6 261.8 648.8 259.7 662.3 254.9 674.0 252.5 684.5 251.9 696.8 253.2 710.4 256.8 719.3 260.5 722.0 262.6 723.2 264.7 723.2 266.9 722.3 268.7 717.1 273.6 705.9 280.0 695.4 284.4 687.0 286.3 679.1 286.7 671.2 285.7 663.9 283.5Z" fill="#0054ff"/><path d="M659.8 280.5 650.6 275.9 645.0 272.2 642.0 269.0 641.2 267.2 641.2 265.6 642.9 262.9 647.1 260.0 654.9 256.8 664.7 253.7 673.3 252.0 680.6 251.3 688.2 251.5 696.3 252.5 706.5 255.0 716.1 258.4 720.5 261.0 722.6 264.1 722.4 266.3 721.3 268.2 715.9 272.9 703.6 279.7 692.7 283.8 684.9 285.2 676.8 285.2 668.4 283.6 659.8 280.5Z" fill="#0070ff"/><path d="M664.8 281.1 653.4 276.1 645.4 271.1 643.3 269.0 642.0 266.7 641.9 264.6 643.0 262.7 645.6 260.4 649.0 258.6 661.4 254.1 672.6 251.5 683.3 250.7 694.8 251.6 707.8 254.8 717.7 258.7 720.5 260.8 721.8 262.8 721.9 264.9 720.8 267.1 716.2 271.3 705.0 277.6 694.4 281.9 687.3 283.6 679.5 284.1 672.2 283.2 664.8 281.1Z" fill="#008cff"/><path d="M660.6 278.1 652.3 274.1 646.5 270.5 643.4 267.3 642.5 264.1 643.9 261.5 648.0 258.6 654.9 255.6 664.6 252.5 671.9 251.0 679.8 250.1 687.1 250.1 694.3 250.9 703.9 253.1 713.8 256.4 719.0 259.2 721.2 262.2 721.1 264.3 719.9 266.5 714.3 271.1 701.9 277.7 691.7 281.4 683.9 282.7 676.5 282.5 669.3 281.2 660.6 278.1Z" fill="#00a8ff"/><path d="M664.7 278.4 654.3 273.7 646.4 268.8 644.3 266.7 643.2 264.4 643.4 262.4 644.4 260.8 647.1 258.6 650.6 256.8 663.2 252.3 673.5 250.1 683.7 249.4 695.0 250.4 707.0 253.4 716.8 257.3 719.1 259.0 720.5 260.9 720.6 262.9 719.8 264.8 715.3 269.0 705.0 274.9 694.6 279.2 687.4 280.9 679.9 281.4 672.0 280.5 664.7 278.4Z" fill="#00c4ff"/><path d="M661.5 275.7 651.6 270.9 645.7 266.7 644.4 265.1 643.7 263.0 644.2 261.1 645.3 259.6 651.7 255.7 664.5 251.4 674.0 249.4 684.4 248.7 695.6 249.9 708.2 253.2 716.4 256.6 718.5 258.2 719.9 260.4 719.9 262.3 718.9 264.2 713.5 268.9 701.9 275.0 692.0 278.6 684.3 280.0 677.2 280.0 670.2 278.8 661.5 275.7Z" fill="#00e0ff"/><path d="M665.6 276.0 654.3 271.0 647.2 266.6 645.3 264.5 644.4 262.7 644.5 261.0 645.3 259.4 648.0 257.2 651.4 255.3 663.0 251.1 673.3 248.8 683.2 248.1 694.1 249.0 707.0 252.2 715.9 255.9 718.1 257.5 719.3 259.6 719.3 261.3 718.4 263.1 713.8 267.3 703.3 273.0 693.7 276.8 686.6 278.4 679.6 278.8 672.9 278.1 665.6 276.0Z" fill="#00e8ed"/><path d="M663.2 273.8 653.1 269.1 647.1 265.0 645.0 261.6 645.2 259.7 646.2 258.1 651.8 254.6 663.4 250.4 673.7 248.1 683.5 247.4 694.7 248.4 706.6 251.5 715.5 255.2 717.6 256.8 718.7 258.8 718.6 260.8 717.5 262.6 712.7 266.6 702.0 272.3 692.2 276.0 684.7 277.4 677.8 277.4 671.1 276.4 663.2 273.8Z" fill="#00e9d3"/><path d="M667.3 274.0 657.5 270.0 649.3 265.3 645.9 261.7 645.6 259.7 646.3 257.9 648.2 256.1 651.5 254.2 662.9 249.9 673.0 247.6 682.9 246.7 693.2 247.5 705.4 250.5 714.4 254.1 716.7 255.6 718.1 257.7 718.2 259.0 717.5 260.9 713.0 265.0 703.4 270.3 694.0 274.1 686.9 275.8 680.7 276.3 673.8 275.6 667.3 274.0Z" fill="#00eab9"/><path d="M664.0 271.5 654.7 267.2 648.5 263.2 646.3 259.9 646.3 258.3 647.2 256.7 652.6 253.1 664.2 248.9 673.9 246.8 683.4 246.1 693.9 247.0 705.8 250.0 714.0 253.3 716.2 254.9 717.5 257.0 717.5 258.5 716.6 260.3 711.9 264.4 701.3 270.0 691.4 273.6 684.9 274.8 678.2 274.9 670.8 273.7 664.0 271.5Z" fill="#00eaa0"/><path d="M668.1 271.7 658.3 267.7 650.1 263.1 647.0 259.4 646.8 257.6 647.6 256.0 649.6 254.2 653.0 252.4 663.7 248.4 673.9 246.1 683.4 245.4 693.5 246.3 704.6 249.0 713.0 252.2 715.3 253.8 716.8 255.7 716.9 257.4 716.1 259.2 712.2 262.8 703.5 267.6 694.2 271.5 687.3 273.2 681.4 273.7 674.7 273.2 668.1 271.7Z" fill="#00eb86"/><path d="M665.6 269.5 656.2 265.4 649.9 261.5 647.5 258.3 647.5 256.3 648.5 254.8 654.1 251.3 664.1 247.7 673.1 245.6 682.8 244.7 693.1 245.5 704.2 248.2 712.6 251.5 715.0 253.2 716.3 255.0 716.4 256.3 715.7 258.1 711.1 262.2 701.4 267.3 692.2 270.8 685.5 272.2 679.3 272.4 672.8 271.6 665.6 269.5Z" fill="#00eb6c"/><path d="M668.9 269.3 659.0 265.5 651.6 261.3 648.2 257.7 647.9 256.3 648.6 254.5 650.5 252.7 653.7 250.9 664.5 246.9 673.6 244.8 683.5 244.0 693.7 245.0 704.7 247.8 712.8 251.1 714.9 252.8 715.7 254.3 715.7 255.8 714.8 257.6 710.7 261.1 701.9 265.8 693.4 269.2 687.3 270.6 681.4 271.2 675.7 270.8 668.9 269.3Z" fill="#00ec53"/><path d="M667.4 267.5 657.8 263.5 651.4 259.7 648.6 256.3 648.6 254.9 649.4 253.3 654.1 250.1 664.8 246.2 674.0 244.1 683.3 243.4 693.3 244.3 703.5 246.7 711.8 250.0 714.0 251.6 715.1 253.3 715.2 254.7 714.3 256.5 710.3 260.0 701.5 264.7 693.0 268.0 687.2 269.4 680.4 269.9 673.7 269.2 667.4 267.5Z" fill="#00ed39"/><path d="M663.2 264.7 656.6 261.6 651.8 258.6 649.5 256.1 649.3 253.6 650.8 251.6 654.5 249.3 669.0 244.4 681.0 242.7 692.9 243.5 700.5 245.2 708.6 247.9 712.5 250.0 714.5 252.4 714.6 253.6 713.9 255.3 709.2 259.3 699.4 264.3 690.4 267.5 684.0 268.5 676.7 268.4 670.6 267.2 663.2 264.7Z" fill="#00ed1f"/><path d="M668.1 265.2 659.3 261.7 652.8 258.0 650.0 254.9 649.7 253.6 650.3 251.9 654.9 248.6 665.6 244.7 674.8 242.6 683.6 242.0 693.5 243.0 703.6 245.5 711.0 248.5 713.1 250.1 714.0 251.7 714.0 253.1 713.0 254.8 708.8 258.2 700.8 262.4 692.2 265.7 686.3 267.0 680.1 267.4 674.5 266.8 668.1 265.2Z" fill="#00ee06"/><path d="M665.7 263.1 658.1 259.8 652.6 256.4 650.4 253.6 650.3 252.2 651.2 250.6 656.0 247.5 666.0 243.9 675.2 241.9 683.2 241.3 692.1 242.0 702.4 244.5 709.9 247.4 712.2 248.9 713.3 250.6 713.4 251.9 712.6 253.7 708.5 257.1 699.5 261.7 690.7 264.8 684.4 266.0 678.9 266.1 672.7 265.2 665.7 263.1Z" fill="#10ee00"/><path d="M669.9 263.2 660.9 259.8 653.6 255.8 651.0 252.7 650.9 251.4 651.6 249.9 656.4 246.7 665.4 243.4 674.5 241.3 683.0 240.6 691.7 241.3 702.0 243.7 709.5 246.7 711.7 248.2 712.7 249.7 712.8 251.0 712.1 252.6 708.8 255.5 701.8 259.4 693.5 262.8 686.8 264.4 681.0 264.9 675.4 264.5 669.9 263.2Z" fill="#24ee00"/><path d="M667.4 261.2 659.7 258.0 654.0 254.6 651.6 251.5 652.1 249.2 656.8 246.0 665.8 242.7 675.0 240.6 683.7 239.9 692.3 240.7 702.4 243.2 709.7 246.3 712.2 249.0 712.2 250.3 711.2 252.0 707.7 254.9 699.7 259.1 691.0 262.2 685.4 263.3 680.0 263.6 673.5 262.9 667.4 261.2Z" fill="#39ee00"/><path d="M670.7 260.9 662.5 258.0 655.5 254.3 652.3 251.0 652.6 248.4 656.4 245.5 665.3 242.2 674.2 240.0 682.5 239.3 690.8 239.8 700.4 242.0 708.1 244.8 710.4 246.3 711.5 247.8 711.1 250.4 708.0 253.4 701.0 257.2 692.7 260.5 687.0 261.8 682.2 262.3 676.4 262.1 670.7 260.9Z" fill="#4def00"/><path d="M668.2 258.9 660.4 255.7 654.8 252.4 652.8 249.9 652.7 248.6 653.5 247.2 657.8 244.3 666.6 241.1 674.7 239.3 683.2 238.6 691.5 239.3 700.8 241.5 708.3 244.4 710.9 247.0 711.0 248.3 710.3 249.8 706.9 252.7 698.9 256.8 691.2 259.6 685.2 260.9 679.6 261.1 674.4 260.5 668.2 258.9Z" fill="#62ef00"/><path d="M671.5 258.6 663.2 255.7 656.5 252.2 653.6 249.3 653.3 248.1 653.8 246.6 657.9 243.7 666.0 240.6 674.0 238.7 682.0 237.9 691.1 238.5 699.6 240.5 707.3 243.3 709.5 244.9 710.3 246.2 709.8 248.7 706.5 251.6 700.3 254.9 692.9 257.9 687.4 259.3 681.8 259.9 677.3 259.7 671.5 258.6Z" fill="#77ef00"/><path d="M669.9 256.9 662.0 253.9 656.3 250.6 654.1 248.2 654.4 245.7 658.3 242.9 666.4 239.9 674.4 238.0 682.7 237.2 690.7 237.8 699.2 239.7 706.2 242.2 708.5 243.7 709.6 245.1 709.3 247.6 706.1 250.5 699.0 254.2 691.5 257.0 686.5 258.2 680.7 258.6 675.3 258.1 669.9 256.9Z" fill="#8bef00"/><path d="M665.7 254.1 656.7 249.5 654.9 247.6 654.7 245.6 656.3 243.7 659.5 241.8 671.6 237.9 681.6 236.6 692.3 237.4 704.4 240.9 707.6 242.6 709.1 244.6 709.1 245.9 708.1 247.4 704.3 250.3 696.9 253.8 688.8 256.4 683.6 257.2 678.3 257.2 672.4 256.3 665.7 254.1Z" fill="#a0ef00"/><path d="M670.8 254.6 663.6 252.0 657.8 248.9 655.3 246.2 655.8 243.8 659.9 241.1 668.1 238.1 675.3 236.5 683.3 235.9 691.9 236.7 700.1 238.7 706.0 241.1 707.6 242.3 708.5 243.7 707.9 245.9 704.6 248.7 698.2 252.0 690.6 254.7 685.9 255.7 680.4 256.1 670.8 254.6Z" fill="#b4ef00"/><path d="M667.4 252.2 660.9 249.4 657.1 246.8 655.9 244.7 656.7 242.6 661.0 240.0 668.5 237.3 675.8 235.7 682.9 235.2 690.4 235.8 699.7 238.0 705.5 240.4 707.1 241.5 707.9 243.0 707.0 245.3 703.4 248.1 696.1 251.6 689.1 253.9 684.0 254.7 678.8 254.8 673.3 253.9 667.4 252.2Z" fill="#c9f000"/><path d="M670.7 252.0 663.6 249.4 658.7 246.6 656.6 244.2 657.0 242.1 660.1 239.8 667.2 237.1 675.1 235.2 682.0 234.5 689.9 235.0 697.6 236.7 704.4 239.3 707.1 241.8 706.5 244.2 703.7 246.5 697.4 249.7 690.8 252.1 685.5 253.3 680.0 253.6 670.7 252.0Z" fill="#ddf000"/><path d="M667.4 249.6 659.2 245.5 657.4 243.6 657.4 241.7 659.2 239.9 662.6 238.1 673.4 234.9 682.6 233.9 691.6 234.7 702.7 237.9 705.6 239.7 706.5 241.2 705.5 243.6 701.8 246.3 695.2 249.3 688.1 251.5 682.8 252.3 677.8 252.1 667.4 249.6Z" fill="#f2f000"/><path d="M671.6 249.7 665.3 247.4 660.2 244.8 658.0 242.4 658.3 240.5 661.6 238.0 668.0 235.6 674.9 233.9 682.3 233.2 690.1 233.8 697.6 235.5 703.5 237.8 705.8 240.1 705.4 241.9 702.4 244.5 697.4 247.1 690.9 249.5 681.4 251.0 671.6 249.7Z" fill="#ffec00"/><path d="M667.4 247.0 660.2 243.2 658.8 241.6 658.8 239.9 660.2 238.4 663.5 236.6 674.3 233.4 683.2 232.5 691.6 233.4 701.0 236.1 704.1 237.9 705.0 239.3 704.9 240.6 704.0 241.8 700.2 244.4 693.4 247.4 687.1 249.2 682.1 249.7 677.6 249.6 667.4 247.0Z" fill="#ffe200"/><path d="M671.5 247.0 665.4 244.8 661.3 242.5 659.6 240.6 659.9 238.6 663.3 236.2 669.8 233.8 676.2 232.4 682.5 231.9 689.0 232.3 696.6 234.0 701.9 236.0 704.3 238.4 703.9 240.2 701.1 242.5 695.6 245.2 689.9 247.2 680.6 248.5 671.5 247.0Z" fill="#ffd800"/><path d="M674.1 246.4 668.4 244.7 663.0 242.2 660.5 240.0 660.5 237.9 663.1 235.8 669.4 233.3 675.4 231.9 682.2 231.2 689.3 231.7 696.2 233.3 701.3 235.3 703.5 237.4 702.9 239.5 700.6 241.4 696.0 243.7 690.4 245.8 681.9 247.2 674.1 246.4Z" fill="#ffce00"/><path d="M671.6 244.4 666.4 242.5 662.4 240.2 661.0 238.4 661.5 236.7 664.8 234.5 670.8 232.3 677.1 231.0 682.6 230.6 689.0 231.1 695.7 232.6 700.8 234.6 702.7 236.7 702.2 238.4 699.4 240.6 694.7 242.9 688.8 244.9 680.7 245.9 671.6 244.4Z" fill="#ffc400"/><path d="M674.2 243.7 668.6 242.0 664.1 239.9 662.0 237.8 662.2 236.0 664.9 234.0 670.5 231.9 676.6 230.5 682.1 230.0 688.4 230.4 695.1 231.8 699.6 233.6 701.8 235.7 701.5 237.2 699.5 239.1 690.4 243.1 681.9 244.5 674.2 243.7Z" fill="#ffba00"/><path d="M670.0 241.2 664.2 238.3 662.9 236.9 662.9 235.4 664.2 234.0 666.9 232.6 675.0 230.2 682.5 229.4 689.9 230.0 697.7 232.2 700.1 233.6 700.9 234.9 700.5 236.6 697.6 238.8 692.7 241.0 687.6 242.5 682.9 243.2 678.5 243.1 670.0 241.2Z" fill="#ffaf00"/><path d="M672.4 240.6 668.1 239.0 664.8 237.1 663.8 235.6 664.0 234.2 666.8 232.2 671.6 230.4 677.2 229.2 682.3 228.8 688.2 229.2 694.0 230.4 698.3 232.2 699.9 233.9 699.3 235.9 697.0 237.6 688.1 241.0 680.5 241.9 672.4 240.6Z" fill="#ffa500"/><path d="M674.0 239.6 669.6 238.1 666.1 236.3 664.8 234.8 665.2 233.1 667.4 231.6 672.3 229.7 682.2 228.2 687.5 228.5 692.5 229.5 697.0 231.2 698.9 233.0 698.5 234.7 696.9 236.1 688.5 239.5 681.5 240.5 674.0 239.6Z" fill="#ffa000"/><path d="M675.8 238.6 671.1 237.2 667.5 235.5 666.1 234.2 666.1 232.5 668.2 230.9 673.0 229.1 682.8 227.7 687.9 228.1 692.6 229.1 696.3 230.6 697.9 232.3 697.5 233.7 695.6 235.2 688.8 238.0 682.6 239.1 675.8 238.6Z" fill="#ff9b00"/><path d="M676.7 237.3 668.9 234.6 667.3 233.2 667.3 231.6 669.0 230.2 672.8 228.7 682.3 227.2 687.0 227.5 691.9 228.5 695.4 230.0 696.6 231.3 696.4 232.6 695.4 233.6 689.0 236.5 683.0 237.6 676.7 237.3Z" fill="#ff9600"/><path d="M676.5 235.8 669.8 233.3 668.5 232.0 668.6 230.8 670.5 229.3 673.7 228.0 681.9 226.7 690.1 227.6 693.9 229.1 695.2 230.3 695.1 231.5 693.8 232.8 688.1 235.2 681.8 236.2 676.5 235.8Z" fill="#ff9100"/><path d="M676.5 234.2 671.0 232.0 670.1 231.1 670.1 229.9 671.6 228.7 674.7 227.4 682.0 226.3 689.1 227.1 692.2 228.2 693.6 229.4 693.6 230.6 692.8 231.5 688.1 233.6 681.9 234.7 676.5 234.2Z" fill="#ff8c00"/><path d="M676.8 232.5 672.8 231.0 671.9 230.1 672.1 228.9 673.5 227.8 676.8 226.6 683.4 226.0 689.6 227.1 691.4 228.1 691.9 229.1 690.3 231.0 685.8 232.5 681.8 233.0 676.8 232.5Z" fill="#ff8800"/><path d="M678.4 230.9 675.1 229.8 674.2 228.3 677.5 226.5 682.7 225.9 687.2 226.5 689.5 228.0 688.6 229.5 685.2 230.8 678.4 230.9Z" fill="#ff8300"/><path d="M680.1 228.8 678.3 228.1 678.3 227.1 682.3 226.2 684.6 226.5 685.7 227.3 685.3 228.1 683.6 228.7 680.1 228.8Z" fill="#ff7e00"/></g><path d="M566 290L670 357L777 291" fill="none" stroke="#c8c8c8" stroke-width="1"/><path d="M545.0 300.7l20 -7.5" stroke="#e2e2e2" stroke-width="2.2"/><path d="M565.2 313.9l20 -7.5" stroke="#e2e2e2" stroke-width="2.2"/><path d="M585.5 327.2l20 -7.5" stroke="#e2e2e2" stroke-width="2.2"/><path d="M605.8 340.4l20 -7.5" stroke="#e2e2e2" stroke-width="2.2"/><path d="M626.0 353.7l20 -7.5" stroke="#e2e2e2" stroke-width="2.2"/><path d="M766.0 303.3l20 7.5" stroke="#e2e2e2" stroke-width="2.2"/><path d="M750.5 313.8l20 7.5" stroke="#e2e2e2" stroke-width="2.2"/><path d="M735.0 324.3l20 7.5" stroke="#e2e2e2" stroke-width="2.2"/><path d="M719.5 334.8l20 7.5" stroke="#e2e2e2" stroke-width="2.2"/><path d="M704.0 345.3l20 7.5" stroke="#e2e2e2" stroke-width="2.2"/><rect x="639" y="361" width="27" height="8" fill="none" stroke="#dadada" stroke-width="0.8" transform="rotate(-22 652 365)"/><path d="M643 369l18-7" stroke="#e0e0e0" stroke-width="2"/><rect x="676" y="364" width="27" height="8" fill="none" stroke="#dadada" stroke-width="0.8" transform="rotate(22 689 368)"/><path d="M680 364l18 7" stroke="#e0e0e0" stroke-width="2"/></svg>
<div class="a" style="left:178px;top:386px;width:641px;height:284px;background:#f0f0f0"></div>
<div class="a ui" style="left:182px;top:388px;color:#333">数据曲线</div>
<svg class="a" style="left:786px;top:387px" width="30" height="14"><rect x="1.5" y="3.5" width="9" height="9" fill="#f4f4f4" stroke="#333" stroke-width="1.2"/><path d="M4 3.5V1.2h9v9h-2.5" fill="none" stroke="#333" stroke-width="1.2"/><path d="M22 3L28 10M28 3L22 10" stroke="#111" stroke-width="1.6"/></svg>
<div class="tb sel" style="left:181px;width:46px">播放</div>
<div class="tb" style="left:229px;width:48px">清除</div>
<div class="tb" style="left:279px;width:49px">导出</div>
<div class="tb" style="left:330px;width:48px">截图</div>
<div class="tb" style="left:380px;width:48px">自动缩放</div>
<div class="tb" style="left:430px;width:48px">切换均值</div>
<div class="a" style="left:481px;top:409px;width:9px;height:9px;border:1px solid #555;background:#fff"></div>
<div class="a ui" style="left:493px;top:408px;font-size:11px;color:#333">横游标</div>
<div class="a" style="left:528px;top:409px;width:9px;height:9px;border:1px solid #555;background:#fff"></div>
<div class="a ui" style="left:540px;top:408px;font-size:11px;color:#333">纵游标</div>
<div class="a" style="left:576px;top:409px;width:9px;height:9px;border:1px solid #555;background:#fff"></div>
<svg class="a" style="left:576px;top:410px" width="9" height="8"><path d="M1.5 4L3.5 6.3L7.5 1.5" fill="none" stroke="#333" stroke-width="1.2"/></svg>
<div class="a ui" style="left:588px;top:408px;font-size:11px;color:#333">图例</div>
<div class="a" style="left:178px;top:425px;width:551px;height:244px;background:#fff"></div>
<div class="a" style="left:729px;top:425px;width:90px;height:244px;background:#fafafa"></div>
<svg class="a" style="left:178px;top:425px" width="551" height="244" viewBox="178 425 551 244"><path d="M301.4 436V632M390.0 436V632M478.6 436V632M567.2 436V632M655.8 436V632M227 454.7H718M227 488.0H718M227 521.2H718M227 554.5H718M227 587.7H718M227 621.0H718" stroke="#efefef" stroke-width="1"/><rect x="226.5" y="436" width="492" height="196" fill="none" stroke="#777" stroke-width="1.2"/><path d="M226.5 627.6h3M226.5 621.0h5M226.5 614.4h3M226.5 607.7h3M226.5 601.1h3M226.5 594.4h3M226.5 587.8h5M226.5 581.1h3M226.5 574.5h3M226.5 567.8h3M226.5 561.2h3M226.5 554.5h5M226.5 547.9h3M226.5 541.2h3M226.5 534.6h3M226.5 527.9h3M226.5 521.3h5M226.5 514.6h3M226.5 508.0h3M226.5 501.3h3M226.5 494.7h3M226.5 488.0h5M226.5 481.4h3M226.5 474.7h3M226.5 468.1h3M226.5 461.4h3M226.5 454.8h5M226.5 448.1h3M226.5 441.5h3" stroke="#333" stroke-width="1.4"/><text x="221" y="457.7" font-size="8.5" fill="#444" text-anchor="end" font-family="Liberation Sans">5625</text><text x="221" y="491.0" font-size="8.5" fill="#444" text-anchor="end" font-family="Liberation Sans">5600</text><text x="221" y="524.2" font-size="8.5" fill="#444" text-anchor="end" font-family="Liberation Sans">5575</text><text x="221" y="557.5" font-size="8.5" fill="#444" text-anchor="end" font-family="Liberation Sans">5550</text><text x="221" y="590.7" font-size="8.5" fill="#444" text-anchor="end" font-family="Liberation Sans">5525</text><text x="221" y="624.0" font-size="8.5" fill="#444" text-anchor="end" font-family="Liberation Sans">5500</text><path d="M230.5 632v-5M248.2 632v-5M266.0 632v-5M283.7 632v-5M301.4 632v-8M319.1 632v-5M336.8 632v-5M354.6 632v-5M372.3 632v-5M390.0 632v-8M407.7 632v-5M425.4 632v-5M443.2 632v-5M460.9 632v-5M478.6 632v-8M496.3 632v-5M514.0 632v-5M531.8 632v-5M549.5 632v-5M567.2 632v-8M584.9 632v-5M602.6 632v-5M620.4 632v-5M638.1 632v-5M655.8 632v-8M673.5 632v-5M691.2 632v-5M709.0 632v-5" stroke="#333" stroke-width="1.4"/><text x="299.4" y="646" font-size="8" fill="#555" font-family="Liberation Sans" font-style="italic" transform="rotate(8 299.4 646)">11:25:20</text><text x="388.0" y="646" font-size="8" fill="#555" font-family="Liberation Sans" font-style="italic" transform="rotate(8 388.0 646)">11:25:25</text><text x="476.6" y="646" font-size="8" fill="#555" font-family="Liberation Sans" font-style="italic" transform="rotate(8 476.6 646)">11:25:30</text><text x="565.2" y="646" font-size="8" fill="#555" font-family="Liberation Sans" font-style="italic" transform="rotate(8 565.2 646)">11:25:35</text><text x="653.8" y="646" font-size="8" fill="#555" font-family="Liberation Sans" font-style="italic" transform="rotate(8 653.8 646)">11:25:40</text><text x="471" y="662" font-size="10" fill="#444" text-anchor="middle">时间</text><text x="190" y="533" font-size="9" fill="#444" text-anchor="middle" transform="rotate(-90 190 533)">值</text><polyline points="227.7,485.4 232.4,482.8 235.5,558.8 239.3,538.2 243.2,504.7 247.1,515.0 250.9,544.7 253.5,538.2 256.1,512.5 262.5,615.5 268.4,464.8 271.5,520.2 274.6,542.1 279.3,535.6 281.8,481.5 285.7,526.6 288.3,498.3 290.9,521.5 294.7,518.9 297.3,493.1 302.5,557.5 308.4,511.9 311.5,556.3 315.9,518.9 324.4,480.2 327.7,533.1 330.8,512.5 333.4,520.2 337.2,486.7 339.0,495.7 343.2,495.7 347.5,531.8 350.1,525.3 352.7,533.1 355.3,527.9 359.1,540.8 361.7,521.5 365.1,540.8 368.9,526.6 372.0,536.9 374.6,520.2 377.7,526.6 380.3,526.6 382.3,547.2 384.9,504.7 388.3,547.2 391.3,498.3 396.5,527.9 399.6,524.0 402.9,538.2 410.7,504.7 413.8,545.9 416.3,518.9 422.8,562.7 425.6,508.6 428.2,535.6 431.3,507.3 434.4,578.2 437.7,520.2 440.3,520.2 442.9,551.1 446.0,498.3 449.8,531.8 455.0,542.1 458.3,451.9 460.9,515.0 466.8,475.9 469.9,558.8 473.8,525.3 477.7,520.2 482.9,544.7 486.0,527.9 489.3,585.9 491.9,530.5 495.0,540.8 498.9,541.3 503.0,545.9 505.3,521.5 508.1,533.1 511.2,481.5 517.7,521.5 521.0,494.4 524.1,506.0 529.3,479.7 533.1,498.3 536.5,504.7 543.4,548.5 546.3,498.3 549.4,547.2 553.0,479.0 555.8,522.8 558.9,494.4 561.5,564.0 565.3,484.1 567.9,529.2 570.5,476.4 573.8,543.4 578.2,513.7 581.3,524.0 587.8,511.2 591.6,538.2 595.0,516.3 600.9,587.7 604.0,498.3 607.1,544.7 610.4,503.4 614.3,543.4 627.7,535.6 632.3,524.0 640.1,468.1 646.5,527.1 659.9,493.1 662.7,560.1 673.6,551.6 676.1,508.1 681.3,511.9 683.9,578.2 687.7,552.4 691.1,556.3 694.7,543.4 697.3,518.9 703.2,503.4 706.5,547.2 709.1,506.0 714.8,539.5 718.6,518.9" fill="none" stroke="#a46ad0" stroke-width="1.2" stroke-linejoin="miter"/></svg>
<div class="a" style="left:731px;top:432px;width:86px;height:1px;background:#e8e8e8"></div>
<div class="a lg" style="left:736px;top:428.0px;font-size:10.5px">ROI功率</div>
<div class="a" style="left:736px;top:449.5px;width:9px;height:9px;border:1px solid #666;background:#fff"></div>
<div class="a" style="left:745px;top:450.0px;width:66px;height:8px;background:#ee1111"></div>
<div class="a lg" style="left:736px;top:464.0px;font-size:10.5px">0.209</div>
<div class="a" style="left:731px;top:490px;width:86px;height:1px;background:#e8e8e8"></div>
<div class="a lg" style="left:736px;top:486.5px;font-size:10.5px">D4σ</div>
<div class="a" style="left:736px;top:508.0px;width:9px;height:9px;border:1px solid #666;background:#fff"></div>
<div class="a" style="left:745px;top:508.5px;width:66px;height:8px;background:#33bb11"></div>
<div class="a lg" style="left:736px;top:522.5px;font-size:10.5px">5268.781</div>
<div class="a" style="left:731px;top:548px;width:86px;height:1px;background:#e8e8e8"></div>
<div class="a lg" style="left:736px;top:544.5px;font-size:10.5px">D4σ椭圆率</div>
<div class="a" style="left:736px;top:566.0px;width:9px;height:9px;border:1px solid #666;background:#fff"></div>
<div class="a" style="left:745px;top:566.5px;width:66px;height:8px;background:#1144bb"></div>
<div class="a lg" style="left:736px;top:580.5px;font-size:10.5px">0.823</div>
<div class="a" style="left:731px;top:606px;width:86px;height:1px;background:#e8e8e8"></div>
<div class="a lg" style="left:736px;top:602.5px;font-size:10.5px">Dpk</div>
<div class="a" style="left:736px;top:624.0px;width:9px;height:9px;border:1px solid #666;background:#fff"></div>
<svg class="a" style="left:736px;top:624.0px" width="9" height="9"><path d="M1.5 4.5L3.5 7L7.5 2" fill="none" stroke="#333" stroke-width="1.1"/></svg>
<div class="a" style="left:745px;top:624.5px;width:66px;height:8px;background:#6a1aa0"></div>
<div class="a lg" style="left:736px;top:638.5px;font-size:10.5px">5566.156</div>
<div class="a" style="left:820px;top:123px;width:539px;height:263px;background:#f0f0f0"></div>
<div class="a ui" style="left:827px;top:138px;font-size:11px;color:#444">光斑序号</div>
<div class="a" style="left:872px;top:134px;width:65px;height:19px;background:#e3e3e3;border:1px solid #dcdcdc"></div>
<div class="a ui" style="left:876px;top:138px;font-size:11px;color:#333">0</div>
<svg class="a" style="left:926px;top:141px" width="8" height="5"><path d="M1 1L4 4L7 1" fill="none" stroke="#999"/></svg>
<div class="tb" style="left:941px;top:134px;width:52px;height:19px;line-height:17px;font-size:11px;">清除数据</div>
<div class="tb sel" style="left:998px;top:134px;width:52px;height:19px;line-height:17px;font-size:11px;border-color:#3c8ad8;">启用计算</div>
<div class="tb" style="left:1055px;top:134px;width:51px;height:19px;line-height:17px;font-size:11px;">断点采集</div>
<div class="a ui" style="left:827px;top:163px;font-size:11px;color:#444">统计方式</div>
<div class="a" style="left:872px;top:159px;width:93px;height:19px;background:#e3e3e3;border:1px solid #dcdcdc"></div>
<div class="a ui" style="left:876px;top:163px;font-size:11px;color:#333">统计数量</div>
<svg class="a" style="left:954px;top:166px" width="8" height="5"><path d="M1 1L4 4L7 1" fill="none" stroke="#999"/></svg>
<div class="a" style="left:968px;top:159px;width:82px;height:19px;background:#fff;border:1px solid #cfcfcf"></div>
<div class="a ui" style="left:971px;top:163px;font-size:11px;color:#333">10000</div>
<div class="a" style="left:1037px;top:160px;width:12px;height:17px;background:#f2f2f2;border-left:1px solid #ddd"></div>
<svg class="a" style="left:1039px;top:162px" width="8" height="13"><path d="M2 4.5L4 2L6 4.5zM2 8.5L4 11L6 8.5z" fill="#444"/></svg>
<div class="a" style="left:828px;top:182px;width:529px;height:199px;background:#fff;border-top:1px solid #c8c8c8"></div>
<div class="hdr" style="left:831.0px">名称</div>
<div class="hdr" style="left:928.5px">单位</div>
<div class="hdr" style="left:968.0px">值</div>
<div class="hdr" style="left:1033.0px">均值</div>
<div class="hdr" style="left:1098.0px">标准差</div>
<div class="hdr" style="left:1163.0px">最大值</div>
<div class="hdr" style="left:1228.0px">最小值</div>
<div class="hdr" style="left:1294.0px">统计数量</div>
<svg class="a" style="left:830px;top:210.0px" width="8" height="6"><path d="M1 1L4 4L7 1" fill="none" stroke="#555" stroke-width="1.1"/></svg>
<div class="a ui" style="left:843px;top:208.0px;font-size:11px;color:#444">功率/能量</div>
<svg class="a" style="left:918px;top:215.0px" width="7" height="5"><path d="M0.5 0.5H6.5L3.5 4z" fill="#111"/></svg>
<div class="a" style="left:854px;top:223.0px;width:502px;height:18.0px;background:#d9d9d9;overflow:hidden"><span class="cell" style="left:2.0px;">全图总幅值</span><span class="cell" style="left:74.5px;"></span><span class="cell" style="left:114.0px;letter-spacing:0.55px;">2.408e+08</span><span class="cell" style="left:179.0px;letter-spacing:0.55px;">2.407e+08</span><span class="cell" style="left:244.0px;letter-spacing:0.55px;">3.565e+05</span><span class="cell" style="left:309.0px;letter-spacing:0.55px;">2.417e+08</span><span class="cell" style="left:374.0px;letter-spacing:0.55px;">2.399e+08</span><span class="cell" style="left:440.0px;">151</span></div>
<div class="a" style="left:854px;top:241.0px;width:502px;height:18.0px;background:#ffffff;overflow:hidden"><span class="cell" style="left:2.0px;">全图功率</span><span class="cell" style="left:74.5px;">W</span><span class="cell" style="left:114.0px;">1.000</span><span class="cell" style="left:179.0px;">1.000</span><span class="cell" style="left:244.0px;">0.001</span><span class="cell" style="left:309.0px;">1.004</span><span class="cell" style="left:374.0px;">0.996</span><span class="cell" style="left:440.0px;">151</span></div>
<div class="a" style="left:854px;top:259.0px;width:502px;height:18.0px;background:#d9d9d9;overflow:hidden"><span class="cell" style="left:2.0px;">光斑功率</span><span class="cell" style="left:74.5px;">W</span><span class="cell" style="left:114.0px;">0.961</span><span class="cell" style="left:179.0px;">0.960</span><span class="cell" style="left:244.0px;">0.001</span><span class="cell" style="left:309.0px;">0.964</span><span class="cell" style="left:374.0px;">0.957</span><span class="cell" style="left:440.0px;">151</span></div>
<div class="a" style="left:854px;top:277.0px;width:502px;height:18.0px;background:#ffffff;overflow:hidden"><span class="cell" style="left:2.0px;">ROI总幅值</span><span class="cell" style="left:74.5px;"></span><span class="cell" style="left:114.0px;letter-spacing:0.55px;">5.036e+07</span><span class="cell" style="left:179.0px;letter-spacing:0.55px;">5.035e+07</span><span class="cell" style="left:244.0px;letter-spacing:0.55px;">7.528e+04</span><span class="cell" style="left:309.0px;letter-spacing:0.55px;">5.054e+07</span><span class="cell" style="left:374.0px;letter-spacing:0.55px;">5.017e+07</span><span class="cell" style="left:440.0px;">151</span></div>
<div class="a" style="left:854px;top:295.5px;width:502px;height:18.0px;background:#99c5f5;overflow:hidden"><span class="cell" style="left:2.0px;color:#1a3a6a;">ROI功率</span><span class="cell" style="left:74.5px;color:#1a3a6a;">W</span><span class="cell" style="left:114.0px;color:#1a3a6a;">0.209</span><span class="cell" style="left:179.0px;color:#1a3a6a;">0.209</span><span class="cell" style="left:244.0px;color:#1a3a6a;">0.000</span><span class="cell" style="left:309.0px;color:#1a3a6a;">0.210</span><span class="cell" style="left:374.0px;color:#1a3a6a;">0.208</span><span class="cell" style="left:440.0px;color:#1a3a6a;">151</span></div>
<svg class="a" style="left:830px;top:318.5px" width="8" height="6"><path d="M1 1L4 4L7 1" fill="none" stroke="#555" stroke-width="1.1"/></svg>
<div class="a ui" style="left:843px;top:316.5px;font-size:11px;color:#444">空间</div>
<svg class="a" style="left:918px;top:323.5px" width="7" height="5"><path d="M0.5 0.5H6.5L3.5 4z" fill="#111"/></svg>
<div class="a" style="left:854px;top:331.5px;width:502px;height:18.0px;background:#d9d9d9;overflow:hidden"><span class="cell" style="left:2.0px;">质心X轴坐标</span><span class="cell" style="left:74.5px;">μm</span><span class="cell" style="left:114.0px;">3632.645</span><span class="cell" style="left:179.0px;">3632.494</span><span class="cell" style="left:244.0px;">0.163</span><span class="cell" style="left:309.0px;">3633.240</span><span class="cell" style="left:374.0px;">3632.228</span><span class="cell" style="left:440.0px;">151</span></div>
<div class="a" style="left:854px;top:349.5px;width:502px;height:18.0px;background:#ffffff;overflow:hidden"><span class="cell" style="left:2.0px;">质心Y轴坐标</span><span class="cell" style="left:74.5px;">μm</span><span class="cell" style="left:114.0px;">3291.632</span><span class="cell" style="left:179.0px;">3291.283</span><span class="cell" style="left:244.0px;">0.347</span><span class="cell" style="left:309.0px;">3291.769</span><span class="cell" style="left:374.0px;">3289.444</span><span class="cell" style="left:440.0px;">151</span></div>
<div class="a" style="left:854px;top:367.5px;width:502px;height:13.0px;background:#d9d9d9;overflow:hidden"><span class="cell" style="left:2.0px;">D4σX</span><span class="cell" style="left:74.5px;">μm</span><span class="cell" style="left:114.0px;">5754.711</span><span class="cell" style="left:179.0px;">5754.176</span><span class="cell" style="left:244.0px;">0.401</span><span class="cell" style="left:309.0px;">5755.107</span><span class="cell" style="left:374.0px;">5753.310</span><span class="cell" style="left:440.0px;">151</span></div>
<div class="a" style="left:828px;top:380.5px;width:529px;height:1px;background:#bdbdbd"></div>
<div class="a" style="left:820px;top:386px;width:539px;height:1px;background:#8a8a8a"></div>
<div class="a" style="left:820px;top:388.5px;width:539px;height:1px;background:#8a8a8a"></div>
<div class="a ui" style="left:826px;top:392px;color:#444">增强显示</div>
<div class="a" style="left:834px;top:422.5px;width:9px;height:9px;border:1px solid #777;background:#fff"></div>
<div class="a ui" style="left:846px;top:421.5px;font-size:10px;color:#444">当前值</div>
<div class="a" style="left:882px;top:422.5px;width:9px;height:9px;border:1px solid #777;background:#fff"></div>
<svg class="a" style="left:882px;top:423px" width="9" height="8"><path d="M1.5 4L3.5 6.3L7.5 1.5" fill="none" stroke="#444" stroke-width="1.1"/></svg>
<div class="a ui" style="left:894px;top:421.5px;font-size:10px;color:#444">平均值</div>
<div class="a" style="left:930px;top:422.5px;width:9px;height:9px;border:1px solid #777;background:#fff"></div>
<svg class="a" style="left:930px;top:423px" width="9" height="8"><path d="M1.5 4L3.5 6.3L7.5 1.5" fill="none" stroke="#444" stroke-width="1.1"/></svg>
<div class="a ui" style="left:942px;top:421.5px;font-size:10px;color:#444">标准差</div>
<div class="a" style="left:979px;top:426px;width:220px;height:2px;background:#e2e2e2"></div>
<div class="a" style="left:1100px;top:420px;width:8px;height:14px;background:#1a78d8"></div>
<div class="a" style="left:833px;top:440px;width:524px;height:221px;background:#fff;border-top:1px solid #c8c8c8;border-bottom:1px solid #c8c8c8"></div>
<div class="big" style="left:951.5px;top:459.0px"><span class="l">ROI功率 : </span></div>
<div class="big" style="left:1039.0px;top:451.0px"><span class="v">/ 0.209 / 0.000 W</span></div>
<div class="big" style="left:929.0px;top:504.0px"><span class="l">D4σ : </span></div>
<div class="big" style="left:987.6px;top:496.0px"><span class="v">/ 5268.818 / 0.261 μm</span></div>
<div class="big" style="left:955.0px;top:549.0px"><span class="l">D4σ椭圆率 : </span></div>
<div class="big" style="left:1068.4px;top:541.0px"><span class="v">/ 0.823 / 0.000</span></div>
<div class="big" style="left:926.0px;top:594.0px"><span class="l">Dpk : </span></div>
<div class="big" style="left:982.5px;top:586.0px"><span class="v">/ 5573.575 / 19.456 μm</span></div>

<!-- status bar -->
<div class="a" style="left:178px;top:673px;width:1181px;height:17px;background:linear-gradient(#fbfbff,#f0f0f4 60%,#d8d8d8)"></div>
<div class="a" style="left:178px;top:672px;width:1181px;height:1px;background:#c8c8c8"></div>
<div class="a ui" style="left:180px;top:677px;font-size:10.5px;color:#333">2048x2048&nbsp;&nbsp;&nbsp;&nbsp;X:0.00um,Y:0.00um I:4; 1.57%</div>
<div class="a ui" style="left:1306px;top:677px;font-size:10.5px;color:#333">fps:6.2</div>
<div class="a" style="left:1346px;top:675px;width:10px;height:12px;background:#ddd"></div>

<!-- annotation boxes -->
<div class="a" style="left:172px;top:0px;width:1194px;height:116px;border:3px solid #ed7d31;border-top-width:2.5px"></div>
<div class="a" style="left:172px;top:123px;width:635px;height:545px;border:3px solid #35b935"></div>
<div class="a" style="left:823px;top:123px;width:542px;height:553px;border:3px solid #e00000"></div>

<!-- arrows -->
<svg class="a" style="left:0;top:0" width="1545" height="815">
 <g fill="none" stroke="#5b9bd5" stroke-width="1.2">
  <polyline points="1366,46.5 1406.5,46.5 1406.5,74"/>
  <polyline points="181,243.5 102.5,243.5 102.5,290"/>
  <polyline points="1366,435.3 1407,435.3 1407,471"/>
 </g>
 <g fill="#5b9bd5">
  <polygon points="1400,72 1413,72 1406.5,84"/>
  <polygon points="96.5,288 108.5,288 102.5,300"/>
  <polygon points="1401,470 1413,470 1407,482"/>
 </g>
</svg>

<div class="ann" style="left:1379px;top:94.7px">主菜单功能设<br>置区：用于显<br>示、调整参数、<br>管理员权限等<br>功能</div>
<div class="ann" style="left:36px;top:331.3px">测试光斑图像<br>显示区</div>
<div class="ann" style="left:1387px;top:494.7px">测试数据显示<br>区：光斑功率、<br>光斑测试数据<br>（坐标，直径，<br>椭圆度等）光<br>斑平顶均匀性<br>发散角等.</div>

<div class="a" style="left:172px;top:740px;font-size:25px;line-height:30.5px;color:#2a2a2a;white-space:nowrap"><b>窗口特点</b>：所有的显示窗口可自由组合并保存配置文件，方便调用，也可使用系统默认的配置管理功能，根据<br>需求一键布置窗口。灵活多变，满足个性化习惯。</div>
<div class="a" style="left:773px;top:740.5px;font-size:53.6px;line-height:1;color:#000;white-space:nowrap">sdlhmmw.com</div>

</body></html>
